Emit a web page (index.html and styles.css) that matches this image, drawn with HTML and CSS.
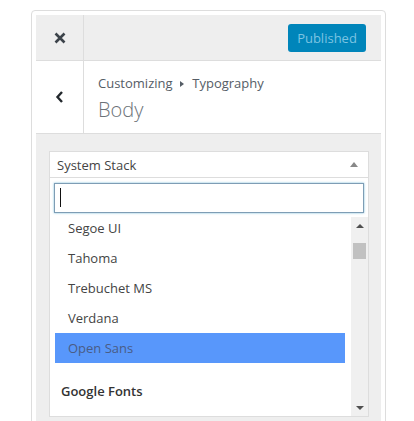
FILE: index.html
```html
<!DOCTYPE html>
<html lang="en">
<head>
    <meta charset="UTF-8">
    <meta name="viewport" content="width=device-width, initial-scale=1.0">
    <title>Customizer - Typography</title>
    <link rel="stylesheet" href="styles.css">
</head>
<body>
    <div class="frame">
        <div class="panel">
            <div class="topbar">
                <button class="icon-btn close" aria-label="Close">
                    <svg width="12" height="12" viewBox="0 0 12 12">
                        <path d="M1.5 1.5 L10.5 10.5 M10.5 1.5 L1.5 10.5" stroke="#3c434a" stroke-width="2.6" fill="none"/>
                    </svg>
                </button>
                <button class="publish">Published</button>
            </div>

            <div class="section-head">
                <button class="icon-btn back" aria-label="Back">
                    <svg width="9" height="12" viewBox="0 0 9 12">
                        <path d="M7 1 L2.5 6 L7 11" stroke="#23282d" stroke-width="2.4" fill="none"/>
                    </svg>
                </button>
                <div class="section-title">
                    <span class="crumb">Customizing <span class="crumb-sep"></span> Typography</span>
                    <h3>Body</h3>
                </div>
            </div>

            <div class="section-body">
                <div class="font-select">
                    <div class="select-box">
                        <span>System Stack</span>
                        <span class="select-arrow"></span>
                    </div>
                    <div class="dropdown">
                        <div class="search">
                            <div class="search-input"><span class="caret"></span></div>
                        </div>
                        <div class="results">
                            <ul class="options">
                                <li>Segoe UI</li>
                                <li>Tahoma</li>
                                <li>Trebuchet MS</li>
                                <li>Verdana</li>
                                <li class="active">Open Sans</li>
                                <li class="group">Google Fonts</li>
                                <li>ABeeZee</li>
                                <li>Abel</li>
                            </ul>
                            <div class="scrollbar">
                                <div class="sb-btn"><span class="sb-up"></span></div>
                                <div class="sb-thumb"></div>
                                <div class="sb-btn sb-end"><span class="sb-down"></span></div>
                            </div>
                        </div>
                    </div>
                </div>
            </div>
        </div>
    </div>
</body>
</html>
```

FILE: styles.css
```css
* {
    box-sizing: border-box;
}
body {
    margin: 0;
    font-family: "Open Sans", "Noto Sans", sans-serif;
    font-size: 13px;
    background-color: #fff;
    overflow: hidden;
}
.frame {
    width: 355px;
    height: 440px;
    margin: 10px 0 0 31px;
    padding: 4px 4px 0;
    border: 1px solid #ddd;
    border-radius: 4px;
}
.panel {
    height: 100%;
    background-color: #eee;
}
.icon-btn {
    width: 48px;
    padding: 0;
    border: 0;
    border-right: 1px solid #ddd;
    background: transparent;
    display: flex;
    align-items: center;
    justify-content: center;
}
.topbar {
    display: flex;
    align-items: center;
    height: 46px;
    border-bottom: 1px solid #ddd;
}
.topbar .close {
    height: 45px;
}
.publish {
    margin-left: auto;
    margin-right: 15px;
    width: 78px;
    height: 28px;
    border: 0;
    border-radius: 3px;
    background-color: #0085ba;
    color: #7cc4e2;
    font-family: inherit;
    font-size: 13px;
    padding: 0;
}
.section-head {
    display: flex;
    height: 73px;
    background-color: #fff;
    border-bottom: 1px solid #ddd;
}
.section-title {
    padding: 13px 0 0 14px;
    color: #555d66;
}
.crumb {
    display: block;
    line-height: 18px;
    font-size: 13px;
}
.crumb-sep {
    display: inline-block;
    width: 0;
    height: 0;
    margin: 0 5px 1px 4px;
    border-top: 3px solid transparent;
    border-bottom: 3px solid transparent;
    border-left: 4px solid #555d66;
}
.section-title h3 {
    margin: 4px 0 0;
    font-size: 20px;
    font-weight: 300;
    line-height: 27px;
    color: #6b7278;
}
.section-body {
    padding: 17px 12px 0 13px;
}
.font-select {
    background-color: #fff;
}
.select-box {
    display: flex;
    align-items: center;
    justify-content: space-between;
    height: 27px;
    padding: 0 10px 0 7px;
    border: 1px solid #ddd;
    color: #444;
}
.select-arrow {
    width: 0;
    height: 0;
    border-left: 4px solid transparent;
    border-right: 4px solid transparent;
    border-bottom: 5px solid #888;
}
.dropdown {
    border: 1px solid #ddd;
    border-top: 0;
}
.search {
    padding: 5px 4px 4px;
}
.search-input {
    height: 30px;
    border: 1px solid #7e9db5;
    box-shadow: 0 0 2px rgba(30, 140, 190, 0.6);
    padding: 4px 0 0 5px;
}
.caret {
    display: block;
    width: 1px;
    height: 19px;
    background-color: #111;
}
.results {
    display: flex;
    height: 199px;
}
.options {
    flex: 1;
    list-style: none;
    margin: -4px 0 0;
    padding: 0;
    overflow: hidden;
    color: #444;
}
.options li {
    height: 30px;
    line-height: 30px;
    margin: 0 6px 0 5px;
    padding-left: 13px;
}
.options li.active {
    background-color: #5897fb;
    color: #4a5c85;
}
.options li.group {
    height: auto;
    line-height: 22px;
    padding: 17px 0 3px 6px;
    font-weight: 600;
    color: #333;
}
.scrollbar {
    width: 17px;
    background-color: #f0f0f0;
    display: flex;
    flex-direction: column;
    align-items: center;
}
.sb-btn {
    width: 17px;
    height: 17px;
    display: flex;
    align-items: center;
    justify-content: center;
}
.sb-end {
    margin-top: auto;
}
.sb-up {
    border-left: 4px solid transparent;
    border-right: 4px solid transparent;
    border-bottom: 4px solid #505050;
}
.sb-down {
    border-left: 4px solid transparent;
    border-right: 4px solid transparent;
    border-top: 4px solid #505050;
}
.sb-thumb {
    width: 13px;
    height: 16px;
    margin-top: 9px;
    background-color: #c1c1c1;
}
```
